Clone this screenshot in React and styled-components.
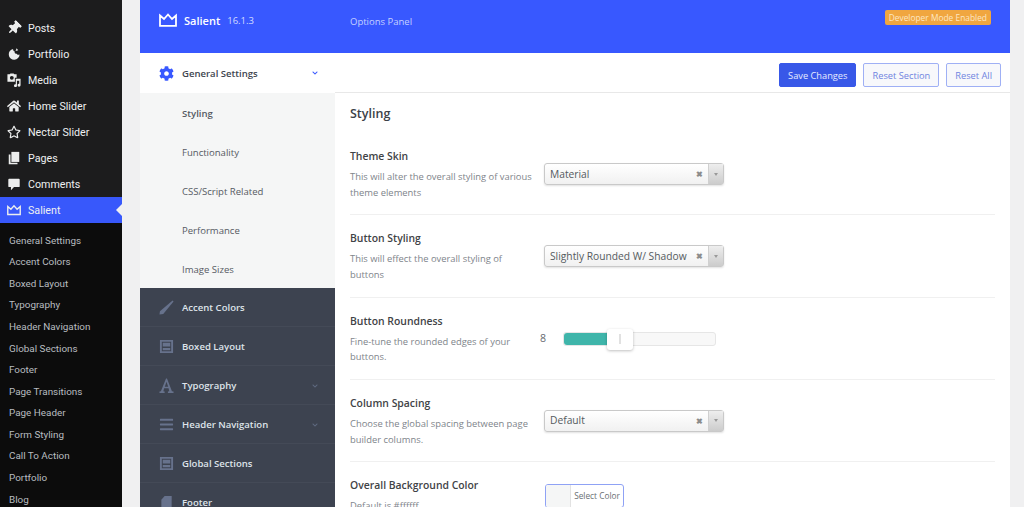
import React from 'react'
import styled, { createGlobalStyle } from 'styled-components'
import { FaThumbtack, FaHome, FaRegStar, FaCog, FaBars, FaChevronDown } from 'react-icons/fa'

const GlobalStyle = createGlobalStyle`
  html, body { margin: 0; padding: 0; height: 100%; overflow: hidden; background: #f0f0f1; }
  body { font-family: "Open Sans", "Noto Sans", sans-serif; }
  #root { height: 100%; }
`
const Page = styled.div`
  display: flex;
  width: 1024px;
  height: 507px;
  overflow: hidden;
`
const AdminMenu = styled.aside`
  width: 122px;
  flex: none;
  background: #1c1c1d;
  padding-top: 15px;
  display: flex;
  flex-direction: column;
  font-family: Roboto, "Open Sans", sans-serif;
`
const MenuItem = styled.div`
  display: flex;
  align-items: center;
  height: 26.05px;
  flex: none;
  position: relative;
  color: #eef0f1;
  font-size: 10.7px;
  background: ${p => (p.$active ? '#3858fb' : 'transparent')};
  svg { width: 14px; height: 14px; margin-left: 7px; margin-right: 7px; flex: none; color: #eceded; }
  ${p => p.$active && `
    &::after {
      content: '';
      position: absolute;
      right: 0;
      top: 7px;
      border: 6px solid transparent;
      border-right-color: #f0f0f1;
      border-left-width: 0;
    }
  `}
`
const PinIcon = styled(FaThumbtack)`
  transform: rotate(45deg);
`
const SubMenu = styled.div`
  flex: 1;
  background: #0c0c0c;
  padding-top: 6px;
  display: flex;
  flex-direction: column;
`
const SubItem = styled.div`
  height: 21.58px;
  flex: none;
  padding-left: 9px;
  display: flex;
  align-items: center;
  font-size: 9.9px;
  color: #b9bdc0;
  white-space: nowrap;
`
const Gutter = styled.div`
  flex: 1;
  padding-left: 18px;
  padding-right: 14px;
  min-width: 0;
`
const Panel = styled.div`
  width: 870px;
  height: 507px;
  background: #fff;
  overflow: hidden;
`
const Header = styled.header`
  height: 53px;
  background: #3858ff;
  display: flex;
  align-items: center;
  color: #fff;
`
const Brand = styled.div`
  width: 195px;
  flex: none;
  height: 100%;
  display: flex;
  align-items: center;
  padding: 0 0 13px 19px;
  box-sizing: border-box;
  gap: 7px;
  svg { width: 18px; height: 14px; color: #fff; }
`
const BrandName = styled.span`
  font-size: 11px;
  font-weight: 600;
`
const Version = styled.span`
  font-size: 9.5px;
  color: #d3dcff;
`
const HeaderMain = styled.div`
  flex: 1;
  height: 100%;
  box-sizing: border-box;
  display: flex;
  align-items: flex-start;
  justify-content: space-between;
  padding: 10px 19px 0 15px;
`
const PanelTitle = styled.span`
  font-size: 9.5px;
  color: #c5d0ff;
  margin-top: 5px;
`
const DevBadge = styled.span`
  background: #f0a640;
  color: #fde6c4;
  font-size: 8.4px;
  line-height: 15px;
  height: 15px;
  padding: 0 4px;
  border-radius: 2px;
  white-space: nowrap;
`
const Body = styled.div`
  display: flex;
  height: 454px;
`
const Nav = styled.nav`
  width: 195px;
  flex: none;
  display: flex;
  flex-direction: column;
  background: #3d4350;
`
const NavGroup = styled.div`
  display: flex;
  align-items: center;
  height: ${p => (p.$open ? 40 : 39)}px;
  flex: none;
  box-sizing: border-box;
  font-size: 9.55px;
  font-weight: 600;
  padding-left: 19px;
  position: relative;
  background: ${p => (p.$open ? '#fff' : '#3d4350')};
  color: ${p => (p.$open ? '#40454f' : '#dfe3ea')};
  border-bottom: ${p => (p.$open ? '0' : '1px solid #444a57')};
`
const NavIcon = styled.span`
  width: 15px;
  height: 16px;
  margin-right: 8px;
  display: flex;
  align-items: center;
  justify-content: center;
  color: ${p => (p.$open ? '#3858ff' : '#67728c')};
  svg { width: 15px; height: 15px; }
`
const NavChevron = styled(FaChevronDown)`
  position: absolute;
  right: 16px;
  top: 17px;
  width: 8px;
  height: 6px;
  color: ${p => (p.$open ? '#3858ff' : '#5f6a80')};
`
const NavSub = styled.div`
  height: 39px;
  flex: none;
  box-sizing: border-box;
  padding: 1px 0 0 42px;
  background: #f5f6f6;
  display: flex;
  align-items: center;
  font-size: 9.55px;
  color: #555a63;
  font-weight: ${p => (p.$current ? 600 : 400)};
`
const Content = styled.main`
  flex: 1;
  min-width: 0;
  display: flex;
  flex-direction: column;
`
const Toolbar = styled.div`
  height: 40px;
  flex: none;
  box-sizing: border-box;
  border-bottom: 1px solid #e8e8e8;
  display: flex;
  align-items: flex-start;
  justify-content: flex-end;
  gap: 7px;
  padding: 10px 9px 0 0;
`
const ActionButton = styled.button`
  height: 24px;
  box-sizing: border-box;
  padding: 0 8px;
  font-family: inherit;
  font-size: 9.25px;
  border-radius: 2px;
  border: 1px solid ${p => (p.$primary ? '#3858e8' : '#9fb0f5')};
  background: ${p => (p.$primary ? '#3858e8' : '#f7f8fb')};
  color: ${p => (p.$primary ? '#e6ebff' : '#6f84e0')};
`
const Form = styled.div`
  padding: 0 15px 0 15px;
`
const SectionTitle = styled.h2`
  margin: 0;
  padding-top: 12px;
  font-size: 12.5px;
  line-height: 18px;
  font-weight: 600;
  color: #3c4147;
  height: 40px;
  box-sizing: border-box;
`
const Row = styled.div`
  display: grid;
  grid-template-columns: 194px 1fr;
  height: 82.3px;
  padding-top: 16px;
  box-sizing: border-box;
  border-bottom: ${p => (p.$last ? '0' : '1px solid #f0f0f0')};
`
const FieldLabel = styled.div`
  font-size: 10.4px;
  font-weight: 600;
  color: #3f4346;
  line-height: 14px;
`
const FieldHelp = styled.div`
  font-size: 9.4px;
  color: #80858b;
  line-height: 15.8px;
  margin-top: 6px;
  width: 188px;
`
const Select = styled.div`
  width: 180px;
  height: 22px;
  box-sizing: border-box;
  margin-top: 14px;
  border: 1px solid #c9c9c9;
  border-radius: 3px;
  background: linear-gradient(#ffffff, #f1f1f1);
  box-shadow: 0 1px 2px rgba(0, 0, 0, 0.12);
  display: flex;
  align-items: center;
  font-size: 10.25px;
  color: #555b60;
  padding-left: 5px;
`
const SelectValue = styled.span`
  flex: 1;
  white-space: nowrap;
  margin-top: -1px;
`
const Clear = styled.span`
  font-size: 7.5px;
  font-weight: 700;
  color: #8c8c8c;
  margin-right: 5px;
`
const Arrow = styled.span`
  width: 14px;
  align-self: stretch;
  background: linear-gradient(#eee, #ccc);
  border-left: 1px solid #d0d0d0;
  display: flex;
  align-items: center;
  justify-content: center;
  &::after {
    content: '';
    border: 2.5px solid transparent;
    border-top: 3px solid #999;
    border-bottom: 0;
  }
`
const SliderRow = styled.div`
  display: flex;
  align-items: center;
  margin: 17px 0 0 -4px;
  height: 16px;
`
const SliderValue = styled.span`
  width: 23px;
  font-size: 10.6px;
  color: #666b70;
  margin-top: -2px;
`
const SliderTrack = styled.div`
  width: 153px;
  height: 14px;
  box-sizing: border-box;
  border: 1px solid #e6e6e6;
  border-radius: 3px;
  background: #f8f8f8;
  position: relative;
`
const SliderFill = styled.div`
  height: 100%;
  background: #3fb5aa;
  border-radius: 3px 0 0 3px;
`
const SliderHandle = styled.div`
  position: absolute;
  left: 43px;
  top: -4px;
  width: 26px;
  height: 21px;
  box-sizing: border-box;
  background: #fff;
  border-radius: 3px;
  box-shadow: 0 1px 3px rgba(0, 0, 0, 0.25);
  &::after {
    content: '';
    position: absolute;
    left: 12px;
    top: 5px;
    width: 2px;
    height: 10px;
    border: 0 solid #e1e1e1;
    border-width: 0 1px;
    box-sizing: border-box;
  }
`
const ColorPicker = styled.div`
  margin: 6px 0 0 1px;
  width: 79px;
  height: 24px;
  box-sizing: border-box;
  border: 1px solid #8fa2f5;
  border-radius: 3px;
  display: flex;
  overflow: hidden;
`
const ColorSwatch = styled.span`
  width: 24px;
  background: #f5f6f6;
  border-right: 1px solid #e2e2e2;
`
const ColorLabel = styled.span`
  flex: 1;
  font-size: 8.3px;
  color: #6a6f74;
  text-align: center;
  line-height: 22px;
  white-space: nowrap;
`

const CrownIcon = () => (
  <svg viewBox="0 0 18 14" fill="none" stroke="currentColor" strokeWidth="1.8">
    <path d="M1 2.500 L5 6 L9 1.500 L13 6 L17 2.500 V12.800 H1 Z" />
  </svg>
)
const PortfolioIcon = () => (
  <svg viewBox="0 0 16 16" fill="currentColor">
    <path d="M7 2.200a6.200 6.200 0 1 0 7.400 6.300c-1.300.7-2.900.5-3.200-.8-1.700.6-3.100-.9-2.200-2.500C7.500 4.800 6.700 3.500 7 2.200zM11 1.500l-1.200 3 3-.9z" />
  </svg>
)
const MediaIcon = () => (
  <svg viewBox="0 0 16 16" fill="currentColor">
    <path fillRule="evenodd" d="M0.500 1.500h2.500l1-1h3.500l1 1h2.500v4H9v4.500H0.500zM5.500 3.300a2.200 2.200 0 1 0 0 4.400 2.200 2.200 0 0 0 0-4.400z" />
    <path d="M10 6.500h5.500v7.500a1.700 1.700 0 1 1-1.500-1.700V8.800h-2.600v5.700a1.700 1.700 0 1 1-1.400-1.700z" />
  </svg>
)
const PagesIcon = () => (
  <svg viewBox="0 0 16 16" fill="currentColor">
    <path d="M5 1h9v11.500H5z" />
    <path d="M2 4h2v9.500h8v1.500H2z" />
  </svg>
)
const BubbleIcon = () => (
  <svg viewBox="0 0 16 16" fill="currentColor">
    <path d="M2.500 2h11A1 1 0 0 1 14.500 3v7.500a1 1 0 0 1-1 1H8L4.500 15v-3.500h-2a1 1 0 0 1-1-1V3a1 1 0 0 1 1-1z" />
  </svg>
)
const PenIcon = () => (
  <svg viewBox="0 0 16 16" fill="currentColor">
    <path d="M14.500 0.500 L15.500 1.500 L4.500 15 L0.500 15.500 L1 12 Z" />
  </svg>
)
const LayoutIcon = () => (
  <svg viewBox="0 0 16 16" fill="currentColor">
    <path fillRule="evenodd" d="M1 1h14v14H1zM3 3v10h10V3z" />
    <path d="M4 4h8v4H4zM4 9.500h8V12H4z" />
  </svg>
)
const TypeIcon = () => (
  <svg viewBox="0 0 16 16" fill="currentColor">
    <path fillRule="evenodd" d="M7.500 0.500h1L13.800 14 15.500 14.500V16H9.500v-1.500l1.500-.5-.8-3H5.500l-.9 3 1.400.5V16H.5v-1.500L2 14zM8 4L6.200 9.300h3.600z" />
  </svg>
)
const FileIcon = () => (
  <svg viewBox="0 0 16 16" fill="currentColor">
    <path d="M6 1h7.500v15h-11V5z" />
  </svg>
)

const adminItems = [
  ['Posts', <PinIcon key="i" />],
  ['Portfolio', <PortfolioIcon key="i" />],
  ['Media', <MediaIcon key="i" />],
  ['Home Slider', <FaHome key="i" />],
  ['Nectar Slider', <FaRegStar key="i" />],
  ['Pages', <PagesIcon key="i" />],
  ['Comments', <BubbleIcon key="i" />],
]
const subItems = ['General Settings', 'Accent Colors', 'Boxed Layout', 'Typography', 'Header Navigation', 'Global Sections', 'Footer', 'Page Transitions', 'Page Header', 'Form Styling', 'Call To Action', 'Portfolio', 'Blog']
const navSubs = ['Styling', 'Functionality', 'CSS/Script Related', 'Performance', 'Image Sizes']
const navGroups = [
  ['Accent Colors', <PenIcon key="i" />, false],
  ['Boxed Layout', <LayoutIcon key="i" />, false],
  ['Typography', <TypeIcon key="i" />, true],
  ['Header Navigation', <FaBars key="i" />, true],
  ['Global Sections', <LayoutIcon key="i" />, false],
  ['Footer', <FileIcon key="i" />, false],
]

const SelectField = ({ value }) => (
  <Select>
    <SelectValue>{value}</SelectValue>
    <Clear>✖</Clear>
    <Arrow />
  </Select>
)

export default function App() {
  return (
    <Page>
      <GlobalStyle />
      <AdminMenu>
        {adminItems.map(([label, icon]) => (
          <MenuItem key={label}>{icon}{label}</MenuItem>
        ))}
        <MenuItem $active><CrownIcon />Salient</MenuItem>
        <SubMenu>
          {subItems.map(s => <SubItem key={s}>{s}</SubItem>)}
        </SubMenu>
      </AdminMenu>
      <Gutter>
        <Panel>
          <Header>
            <Brand>
              <CrownIcon />
              <BrandName>Salient</BrandName>
              <Version>16.1.3</Version>
            </Brand>
            <HeaderMain>
              <PanelTitle>Options Panel</PanelTitle>
              <DevBadge>Developer Mode Enabled</DevBadge>
            </HeaderMain>
          </Header>
          <Body>
            <Nav>
              <NavGroup $open>
                <NavIcon $open><FaCog /></NavIcon>
                General Settings
                <NavChevron $open />
              </NavGroup>
              {navSubs.map((s, i) => <NavSub key={s} $current={i === 0}>{s}</NavSub>)}
              {navGroups.map(([label, icon, more]) => (
                <NavGroup key={label}>
                  <NavIcon>{icon}</NavIcon>
                  {label}
                  {more && <NavChevron />}
                </NavGroup>
              ))}
            </Nav>
            <Content>
              <Toolbar>
                <ActionButton $primary>Save Changes</ActionButton>
                <ActionButton>Reset Section</ActionButton>
                <ActionButton>Reset All</ActionButton>
              </Toolbar>
              <Form>
                <SectionTitle>Styling</SectionTitle>
                <Row>
                  <div>
                    <FieldLabel>Theme Skin</FieldLabel>
                    <FieldHelp>This will alter the overall styling of various theme elements</FieldHelp>
                  </div>
                  <SelectField value="Material" />
                </Row>
                <Row>
                  <div>
                    <FieldLabel>Button Styling</FieldLabel>
                    <FieldHelp>This will effect the overall styling of buttons</FieldHelp>
                  </div>
                  <SelectField value="Slightly Rounded W/ Shadow" />
                </Row>
                <Row>
                  <div>
                    <FieldLabel>Button Roundness</FieldLabel>
                    <FieldHelp>Fine-tune the rounded edges of your buttons.</FieldHelp>
                  </div>
                  <SliderRow>
                    <SliderValue>8</SliderValue>
                    <SliderTrack>
                      <SliderFill style={{ width: '30%' }} />
                      <SliderHandle />
                    </SliderTrack>
                  </SliderRow>
                </Row>
                <Row>
                  <div>
                    <FieldLabel>Column Spacing</FieldLabel>
                    <FieldHelp>Choose the global spacing between page builder columns.</FieldHelp>
                  </div>
                  <SelectField value="Default" />
                </Row>
                <Row $last>
                  <div>
                    <FieldLabel>Overall Background Color</FieldLabel>
                    <FieldHelp>Default is #ffffff</FieldHelp>
                  </div>
                  <ColorPicker>
                    <ColorSwatch />
                    <ColorLabel>Select Color</ColorLabel>
                  </ColorPicker>
                </Row>
              </Form>
            </Content>
          </Body>
        </Panel>
      </Gutter>
    </Page>
  )
}
